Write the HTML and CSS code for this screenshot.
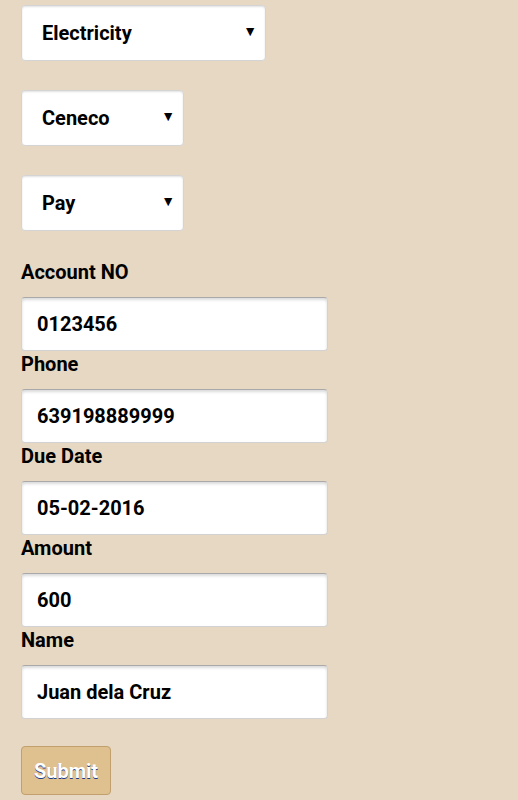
FILE: index.html
```html
<!DOCTYPE html>
<html lang="en">

<head>
    <meta charset="UTF-8">
    <meta name="viewport" content="width=device-width, initial-scale=1.0">
    <link rel="stylesheet" href="styles.css">
</head>

<body>
    <form class="bill-form">
        <div class="select-wrap wide">
            <select class="form-select">
                <option>Electricity</option>
            </select>
        </div>
        <div class="select-wrap">
            <select class="form-select">
                <option>Ceneco</option>
            </select>
        </div>
        <div class="select-wrap">
            <select class="form-select">
                <option>Pay</option>
            </select>
        </div>

        <div class="fields">
            <label for="account">Account NO</label>
            <input type="text" id="account" class="form-control" value="0123456">
            <label for="phone">Phone</label>
            <input type="text" id="phone" class="form-control" value="639198889999">
            <label for="due">Due Date</label>
            <input type="text" id="due" class="form-control" value="05-02-2016">
            <label for="amount">Amount</label>
            <input type="text" id="amount" class="form-control" value="600">
            <label for="name">Name</label>
            <input type="text" id="name" class="form-control" value="Juan dela Cruz">
        </div>

        <button type="button" class="btn">Submit</button>
    </form>
</body>

</html>
```

FILE: styles.css
```css
/* page */
body {
    margin: 0;
    background-color: #e6d8c3;
    font-family: Roboto, "Liberation Sans", sans-serif;
    color: #000;
}

.bill-form {
    padding: 5px 0 0 21px;
}

/* dropdowns */
.select-wrap {
    position: relative;
    width: 163px;
    margin-bottom: 29px;
}

.select-wrap.wide {
    width: 245px;
}

.select-wrap::after {
    content: "\25BC";
    position: absolute;
    right: 9px;
    top: 18px;
    font-size: 14px;
    pointer-events: none;
}

.form-select {
    -webkit-appearance: none;
    appearance: none;
    display: block;
    width: 100%;
    height: 56px;
    padding: 0 0 0 20px;
    border: 1px solid #d4d4d4;
    border-radius: 4px;
    background: #fff;
    box-shadow: inset 0 1px 2px rgba(0, 0, 0, 0.12);
    font-family: inherit;
    font-size: 20px;
    font-weight: bold;
    color: #000;
    outline: 0;
}

/* text fields */
label {
    display: block;
    font-size: 20px;
    font-weight: bold;
    line-height: 24px;
    margin-bottom: 13px;
}

.form-control {
    display: block;
    box-sizing: border-box;
    width: 307px;
    height: 54px;
    padding: 0 0 0 15px;
    margin-bottom: 1px;
    border: 1px solid #d2d2d2;
    border-top-color: #a9a9a9;
    border-radius: 4px;
    background: #fff;
    box-shadow: inset 0 2px 3px rgba(0, 0, 0, 0.15);
    font-family: inherit;
    font-size: 20px;
    font-weight: bold;
    color: #000;
    outline: 0;
}

/* button */
.btn {
    margin-top: 26px;
    width: 90px;
    height: 49px;
    padding: 0;
    background-color: #dfc08f;
    border: 1px solid #c1a06d;
    border-radius: 4px;
    color: #fff;
    font-family: inherit;
    font-size: 20px;
    font-weight: bold;
    text-shadow: 0 1px 0 #1b3a8a;
    cursor: pointer;
}
```
